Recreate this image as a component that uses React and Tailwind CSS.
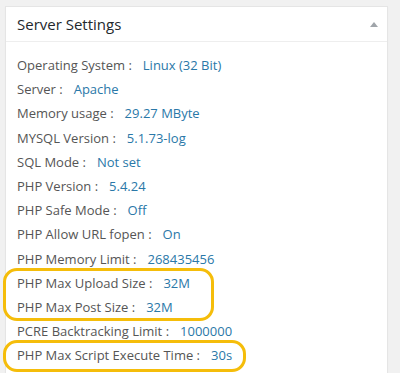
import React from 'react';

const rows = [
  ['Operating System', 'Linux (32 Bit)'],
  ['Server', 'Apache'],
  ['Memory usage', '29.27 MByte'],
  ['MYSQL Version', '5.1.73-log'],
  ['SQL Mode', 'Not set'],
  ['PHP Version', '5.4.24'],
  ['PHP Safe Mode', 'Off'],
  ['PHP Allow URL fopen', 'On'],
  ['PHP Memory Limit', '268435456'],
  ['PHP Max Upload Size', '32M'],
  ['PHP Max Post Size', '32M'],
  ['PCRE Backtracking Limit', '1000000'],
  ['PHP Max Script Execute Time', '30s'],
];

const App = () => {
  return (
    <div className="relative w-[400px] h-[373px] overflow-hidden bg-[#f1f1f1] pt-[6px] pl-[5px] pr-[12px]" style={{ fontFamily: '"Open Sans", sans-serif' }}>
      <div className="bg-white border border-[#e5e5e5] shadow-[0_1px_1px_rgba(0,0,0,0.04)] h-[400px]">
        {/* Header */}
        <div className="flex items-center justify-between h-[35px] pl-[11px] pr-[9px] border-b border-[#eeeeee]">
          <h2 className="text-[15px] text-[#23282d] leading-none">Server Settings</h2>
          <span className="w-0 h-0 border-l-[4px] border-r-[4px] border-b-[5px] border-l-transparent border-r-transparent border-b-[#a0a5aa]" />
        </div>

        {/* Rows */}
        <div className="pt-[14px] pl-[11px]">
          {rows.map(([label, value]) => (
            <div key={label} className="text-[13px] leading-[18.2px] mb-[6px] text-[#555]">
              {label} :
              <span className="ml-[11px] text-[#2a78a8]">{value}</span>
            </div>
          ))}
        </div>
      </div>

      {/* Annotation ovals */}
      <div className="absolute left-[3px] top-[268px] w-[211px] h-[53px] border-[3px] border-[#f5bd0a] rounded-[14px]" />
      <div className="absolute left-[3px] top-[340px] w-[243px] h-[32px] border-[3px] border-[#f5bd0a] rounded-[14px]" />
    </div>
  );
};

export default App;
